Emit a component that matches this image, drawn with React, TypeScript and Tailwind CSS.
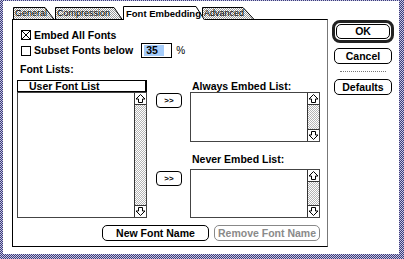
import React from 'react';

const winDither = "bg-[repeating-conic-gradient(#3c3c78_0_25%,#c4c4e4_0_50%)] bg-[length:2px_2px]";
const trackDither = "bg-[repeating-conic-gradient(#b4b4b4_0_25%,#ffffff_0_50%)] bg-[length:2px_2px]";

function Tab({ label, width, slant, active, className }: { label: string; width: number; slant: number; active?: boolean; className: string }) {
  const h = active ? 14 : 13;
  const id = 'dith-' + label.replace(/\s/g, '');
  return (
    <div className={`relative shrink-0 ${className}`}>
      <svg width={width} height={h} className="absolute inset-0">
        <defs>
          <pattern id={id} width="2" height="2" patternUnits="userSpaceOnUse">
            <rect width="2" height="2" fill="#ffffff" />
            <rect width="1" height="1" fill="#9a9a9a" />
            <rect x="1" y="1" width="1" height="1" fill="#9a9a9a" />
          </pattern>
        </defs>
        <path
          d={`M0.5 ${h} V0.5 H${width - slant} L${width} ${h} Z`}
          fill={active ? '#ffffff' : `url(#${id})`}
          stroke="none"
        />
        <path d={`M0.5 ${h} V0.5 H${width - slant} L${width - 0.5} ${h}`} fill="none" stroke="#000" strokeWidth="1" />
        {!active && <path d={`M0 ${h - 0.5} H${width}`} stroke="#000" strokeWidth="1" />}
      </svg>
      <span
        className={`relative block whitespace-nowrap ${active ? 'pl-[3px] pt-[2px] text-[9.5px] leading-[11px] font-bold' : 'pl-[2px] text-[9px] leading-[12px]'}`}
      >
        {label}
      </span>
    </div>
  );
}

function Arrow({ up }: { up?: boolean }) {
  return (
    <svg width="11" height="11" viewBox="0 0 11 11">
      <path
        d={up ? 'M5.5 1.5 L10 6 H7.5 V9.5 H3.5 V6 H1 Z' : 'M5.5 9.5 L10 5 H7.5 V1.5 H3.5 V5 H1 Z'}
        fill="#fff"
        stroke="#000"
        strokeWidth="1"
      />
    </svg>
  );
}

function ScrollBar() {
  return (
    <div className="w-[12px] h-full border-l border-[#333] flex flex-col">
      <div className="h-[12px] border-b border-[#333] flex items-center justify-center bg-white">
        <Arrow up />
      </div>
      <div className={`flex-1 ${trackDither}`} />
      <div className="h-[12px] border-t border-[#333] flex items-center justify-center bg-white">
        <Arrow />
      </div>
    </div>
  );
}

function MoveButton() {
  return (
    <div className="w-[26px] h-[15px] rounded-[4px] border border-black flex items-center justify-center text-[8px] leading-none">
      &gt;&gt;
    </div>
  );
}

export default function App() {
  return (
    <div className={`w-[404px] h-[259px] pt-px pl-[3px] pr-[5px] pb-[5px] ${winDither} font-['Liberation_Sans',Arial,sans-serif] text-black`}>
      <div className="w-full h-full bg-white flex pl-[9px]">
        {/* tabbed panel */}
        <div className="flex flex-col pt-[5px]">
          <div className="flex items-end h-[14px] -mb-px pl-px relative z-10">
            <Tab label="General" width={42} slant={10} className="w-[42px] h-[13px]" />
            <Tab label="Compression" width={68} slant={9} className="w-[68px] h-[13px]" />
            <Tab label="Font Embedding" width={82} slant={9} active className="w-[82px] h-[14px] z-10" />
            <Tab label="Advanced" width={53} slant={12} className="w-[53px] h-[13px] -ml-[3px]" />
          </div>

          <div className="w-[316px] h-[228px] border-l border-t border-b border-black border-r border-r-[#777] flex flex-col text-[10.5px] font-bold">
            <div className="mt-[9px] h-[12px] pl-[8px] flex items-center">
              <svg width="10" height="10" viewBox="0 0 10 10">
                <rect x="0.5" y="0.5" width="9" height="9" fill="#fff" stroke="#000" />
                <path d="M1 1 L9 9 M9 1 L1 9" stroke="#000" strokeWidth="1" />
              </svg>
              <span className="ml-[3px] leading-none">Embed All Fonts</span>
            </div>

            <div className="mt-[2px] h-[15px] pl-[8px] flex items-center">
              <svg width="10" height="10" viewBox="0 0 10 10">
                <rect x="0.5" y="0.5" width="9" height="9" fill="#fff" stroke="#000" />
              </svg>
              <span className="ml-[3px] leading-none">Subset Fonts below</span>
              <div className="ml-[8px] w-[31px] h-[15px] border border-black flex items-center pl-[2px]">
                <span className="bg-[#a6cdfb] h-[11px] w-[20px] pl-[2px] leading-[11px]">35</span>
              </div>
              <span className="ml-[4px] font-normal text-[10px]">%</span>
            </div>

            <div className="mt-[4px] h-[14px] pl-[7px] flex items-center leading-none">Font Lists:</div>

            <div className="mt-[4px] flex h-[138px]">
              {/* user font list */}
              <div className="ml-[4px] w-[130px] flex flex-col">
                <div className="h-[12px] border border-black border-r-2 flex items-center pl-[11px] leading-none">User Font List</div>
                <div className="flex-1 border border-[#444] flex justify-end">
                  <ScrollBar />
                </div>
              </div>

              {/* move buttons */}
              <div className="ml-[9px] flex flex-col">
                <div className="mt-[13px]">
                  <MoveButton />
                </div>
                <div className="mt-[63px]">
                  <MoveButton />
                </div>
              </div>

              {/* embed lists */}
              <div className="ml-[8px] w-[130px] flex flex-col">
                <div className="h-[12px] pl-[2px] flex items-center leading-none">Always Embed List:</div>
                <div className="h-[50px] border border-[#444] flex justify-end">
                  <ScrollBar />
                </div>
                <div className="mt-[10px] h-[15px] pl-[2px] flex items-center leading-none">Never Embed List:</div>
                <div className="mt-[2px] flex-1 border border-[#444] flex justify-end">
                  <ScrollBar />
                </div>
              </div>
            </div>

            <div className="mt-[7px] flex justify-end pr-[7px] gap-[5px]">
              <div className="w-[107px] h-[16px] rounded-[5px] border border-black flex items-center justify-center leading-none">New Font Name</div>
              <div className="w-[106px] h-[16px] rounded-[5px] border border-[#888] text-[#8a8a8a] flex items-center justify-center leading-none">Remove Font Name</div>
            </div>
          </div>
        </div>

        {/* dialog buttons */}
        <div className="ml-[4px] w-[62px] pt-[19px] flex flex-col items-center text-[10.5px] font-bold">
          <div className="w-[62px] h-[23px] rounded-[8px] border-[3px] border-[#222] p-px">
            <div className="h-full rounded-[5px] border border-black flex items-center justify-center leading-none">OK</div>
          </div>
          <div className="mt-[5px] w-[58px] h-[16px] rounded-[5px] border border-black flex items-center justify-center leading-none">Cancel</div>
          <div className="mt-[7px] w-[46px] border-t border-dotted border-[#777]" />
          <div className="mt-[7px] w-[58px] h-[16px] rounded-[5px] border border-black flex items-center justify-center leading-none">Defaults</div>
        </div>
      </div>
    </div>
  );
}
